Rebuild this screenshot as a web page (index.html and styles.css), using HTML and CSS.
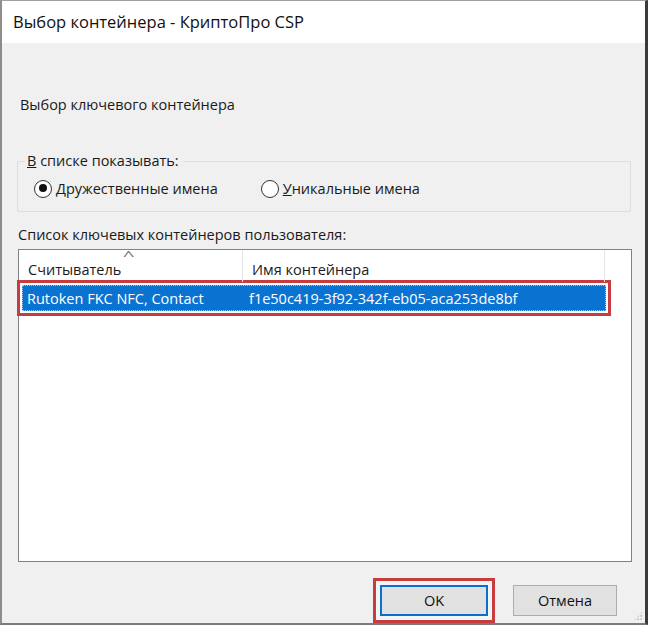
FILE: index.html
```html
<!DOCTYPE html>
<html lang="ru">
<head>
<meta charset="utf-8">
<link rel="stylesheet" href="styles.css">
</head>
<body>
<div class="window">
  <div class="titlebar">Выбор контейнера - КриптоПро CSP</div>
  <div class="content">
    <div class="heading">Выбор ключевого контейнера</div>
    <fieldset class="group">
      <legend><u>В</u> списке показывать:</legend>
      <div class="radios">
        <label class="radio"><span class="dot checked"></span><span><u>Д</u>ружественные имена</span></label>
        <label class="radio second"><span class="dot"></span><span><u>У</u>никальные имена</span></label>
      </div>
    </fieldset>
    <div class="listlabel">Список ключевых контейнеров пользователя:</div>
    <div class="list">
      <div class="header">
        <div class="col c1">Считыватель<span class="sort">^</span></div>
        <div class="col c2">Имя контейнера</div>
        <div class="col c3"></div>
      </div>
      <div class="rowwrap">
        <div class="row selected">
          <div class="cell c1">Rutoken FKC NFC, Contact</div>
          <div class="cell c2">f1e50c419-3f92-342f-eb05-aca253de8bf</div>
        </div>
      </div>
    </div>
    <div class="buttons">
      <div class="okwrap"><button class="btn ok">OK</button></div>
      <button class="btn cancel">Отмена</button>
    </div>
    <div class="grip"></div>
  </div>
</div>
</body>
</html>
```
FILE: styles.css
```css
* { box-sizing: border-box; }
html, body { margin: 0; padding: 0; }
body {
  width: 648px;
  height: 625px;
  overflow: hidden;
  font-family: "Open Sans", "Noto Sans", sans-serif;
  font-size: 14.5px;
  color: #1a1a1a;
  background: #fff;
}
.window {
  width: 648px;
  height: 625px;
  border-top: 1px solid #a0a0a0;
  border-left: 2px solid #8c8c8c;
  border-right: 3px solid #3a3a3a;
  border-bottom: 2px solid #7a7a7a;
  display: flex;
  flex-direction: column;
  background: #f0f0f0;
}
.titlebar {
  height: 44px;
  background: #fff;
  padding-left: 11px;
  display: flex;
  align-items: center;
  font-size: 16.5px;
  color: #111;
  padding-bottom: 2px;
}
.content {
  position: relative;
  flex: 1;
  padding: 0 15px 0 15px;
  display: flex;
  flex-direction: column;
}
.heading {
  margin-top: 52px;
  padding-left: 3px;
  line-height: 20px;
}
.group {
  margin: 36px 0 0 0;
  padding: 0;
  border: 1px solid #dcdcdc;
  border-radius: 2px;
  height: 61px;
  position: relative;
  width: 614px;
}
.group legend {
  margin-left: 7px;
  padding: 0 4px 0 2px;
  line-height: 20px;
}
.radios {
  display: flex;
  padding-left: 16px;
  margin-top: 8px;
}
.radio {
  display: flex;
  align-items: center;
  gap: 4px;
}
.radio.second { margin-left: 43px; }
.dot {
  width: 18px;
  height: 18px;
  border-radius: 50%;
  border: 1.5px solid #333;
  background: #fff;
  display: inline-block;
  position: relative;
}
.dot.checked::after {
  content: "";
  position: absolute;
  left: 3.5px; top: 3.5px;
  width: 8px; height: 8px;
  border-radius: 50%;
  background: #111;
}
.listlabel {
  margin-top: 13px;
  line-height: 20px;
  padding-left: 1px;
}
.list {
  margin-top: 4px;
  margin-left: 1px;
  width: 614px;
  height: 313px;
  background: #fff;
  border: 1px solid #828282;
  position: relative;
}
.header {
  display: flex;
  height: 32px;
}
.col {
  position: relative;
  display: flex;
  align-items: flex-end;
  padding-bottom: 3px;
  padding-left: 9px;
  border-right: 1px solid #e5e5e5;
}
.col.c1 { width: 224px; }
.col.c2 { width: 362px; }
.col.c3 { flex: 1; border-right: 0; }
.sort {
  position: absolute;
  left: 106px;
  top: -4px;
  font-size: 13px;
  color: #777;
  transform: scaleX(1.6);
}
.rowwrap {
  margin-top: -2px;
  margin-left: -2px;
  width: 594px;
  border: 3px solid #c63c3f;
  padding: 2px;
}
.row {
  display: flex;
  height: 26px;
  align-items: center;
}
.row.selected {
  background: #0a73d2;
  color: #fff;
  outline: 1px dotted #9cc8f0;
  outline-offset: -1px;
}
.cell.c1 { width: 223px; padding-left: 5px; }
.cell.c2 { padding-left: 4px; }
.buttons {
  display: flex;
  margin-top: 16px;
  margin-left: 356px;
  align-items: center;
}
.okwrap {
  border: 3px solid #c63c3f;
  padding: 4px;
  background: #f4f4f4;
}
.btn {
  font-family: inherit;
  font-size: 14.5px;
  color: #111;
  background: #e1e1e1;
  height: 31px;
  margin: 0;
}
.ok {
  width: 108px;
  border: 2px solid #0a6fd0;
}
.cancel {
  width: 104px;
  margin-left: 18px;
  border: 1px solid #adadad;
}
.grip {
  position: absolute;
  right: 2px;
  bottom: 2px;
  width: 10px;
  height: 10px;
  background:
    radial-gradient(circle, #bbb 1px, transparent 1.2px) 0 0 / 3.3px 3.3px;
  clip-path: polygon(100% 0, 100% 100%, 0 100%);
}
```
